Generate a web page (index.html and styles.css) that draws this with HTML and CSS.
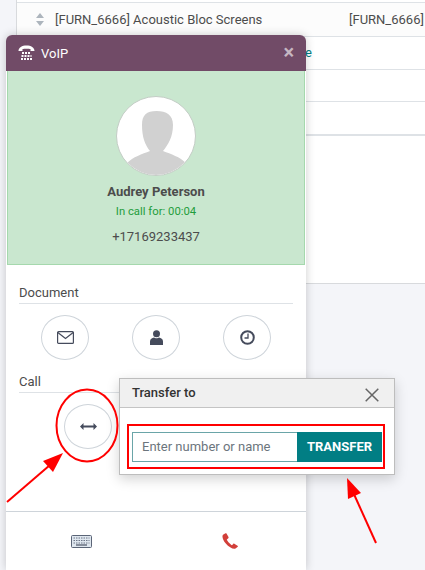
FILE: index.html
```html
<!DOCTYPE html>
<html lang="en">
<head>
	<meta charset="UTF-8">
	<title>VoIP transfer</title>
	<link rel="stylesheet" href="styles.css">
</head>
<body>
	<!-- list behind the softphone -->
	<div class="sheet">
		<div class="row row-first">
			<svg class="sort" width="8" height="13" viewBox="0 0 8 13"><path d="M4 0l4 5H0zM4 13L0 8h8z" fill="#adb5bd"/></svg>
			<span class="row-name">[FURN_6666] Acoustic Bloc Screens</span>
			<span class="row-ref">[FURN_6666]</span>
		</div>
		<div class="row row-link"><a href="#">e</a></div>
		<div class="row row-short"></div>
		<div class="row row-last"></div>
	</div>

	<!-- softphone -->
	<div class="voip">
		<div class="voip-head">
			<svg class="voip-phone" width="17" height="16" viewBox="0 0 17 16">
				<path d="M.5 6C.5 2.500 4 .5 8.500 .5S16.500 2.500 16.500 6H12.500V4C11 3.500 6 3.500 4.500 4V6Z" fill="#fff"/>
				<path d="M4 8h9M3.500 11h10M3 14h11" fill="none" stroke="#fff" stroke-width="2" stroke-dasharray="2 1"/>
			</svg>
			<span class="voip-title">VoIP</span>
			<span class="voip-close">×</span>
		</div>
		<div class="contact">
			<div class="avatar">
				<svg width="78" height="78" viewBox="0 0 78 78">
					<path d="M39.500 14C29.500 14 25 18 25 28C25 40 28 48 33 54C25 57 16 60 10 66V78H69V66C63 60 54 57 46 54C51 48 56 40 56 28C56 18 49.500 14 39.500 14Z" fill="#d1d1d1"/>
				</svg>
			</div>
			<div class="contact-name">Audrey Peterson</div>
			<div class="contact-time">In call for: 00:04</div>
			<div class="contact-phone">+17169233437</div>
		</div>
		<div class="section">
			<div class="section-title">Document</div>
			<div class="btn-row">
				<span class="circle">
					<svg width="17" height="13" viewBox="0 0 17 13" fill="none" stroke="#454b5c" stroke-width="1.200"><rect x=".6" y=".6" width="15.800" height="11.800" rx="1"/><path d="M.8 1.500L8.500 7.500L16.200 1.500"/></svg>
				</span>
				<span class="circle">
					<svg width="13" height="15" viewBox="0 0 13 15" fill="#454b5c"><circle cx="6.500" cy="3.800" r="3.500"/><path d="M0 15V11.500C0 9 2 7.800 4 7.500C5 8.500 8 8.500 9 7.500C11 7.800 13 9 13 11.500V15Z"/></svg>
				</span>
				<span class="circle">
					<svg width="15" height="15" viewBox="0 0 15 15" fill="none" stroke="#454b5c"><circle cx="7.500" cy="7.500" r="6.300" stroke-width="2"/><path d="M8 3.500V8H4.500" stroke-width="1.300"/></svg>
				</span>
			</div>
		</div>
		<div class="section section-call">
			<div class="section-title">Call</div>
			<div class="btn-row btn-row-call">
				<span class="circle">
					<svg width="17" height="7" viewBox="0 0 17 7" fill="#454b5c"><path d="M0 3.500L3.500 0V2.500H13.500V0L17 3.500L13.500 7V4.500H3.500V7Z"/></svg>
				</span>
			</div>
		</div>
		<div class="voip-foot">
			<svg width="21" height="13" viewBox="0 0 21 13">
				<rect x=".5" y=".5" width="20" height="12" rx="1" fill="#dfe7ef" stroke="#5b6577"/>
				<path d="M2.500 3h16M2.500 5.500h16M2.500 8h16" stroke="#6d7688" stroke-dasharray="1.500 1"/>
				<path d="M5 10h11" stroke="#4a5263" stroke-width="1.200"/>
			</svg>
			<svg width="16" height="16" viewBox="0 0 16 16"><path d="M3.500 .3L1 1.800C-.3 3 .8 7 3.800 10.500C7 14.500 11.500 16.500 13.500 15.500L15.800 13.700C16 13.300 15.800 12.900 15.500 12.700L12.300 10.700C11.900 10.500 11.500 10.600 11.200 10.900L10 12.200C8.500 11.700 5.300 8.200 4.800 6.500L6.300 5.200C6.600 4.900 6.700 4.500 6.500 4.100L4.500 .6C4.300 .2 3.800 .1 3.500 .3Z" fill="#d23f3a"/></svg>
		</div>
	</div>

	<!-- transfer popover -->
	<div class="popover">
		<div class="popover-head">
			<span class="popover-title">Transfer to</span>
			<svg class="popover-close" width="14" height="14" viewBox="0 0 14 14"><path d="M.7 .7L13.300 13.300M13.300 .7L.7 13.300" stroke="#666" stroke-width="1.500"/></svg>
		</div>
		<div class="popover-body">
			<div class="transfer">
				<input class="transfer-input" type="text" placeholder="Enter number or name">
				<button class="transfer-btn" type="button">TRANSFER</button>
			</div>
		</div>
	</div>

	<!-- red annotations drawn on the screenshot -->
	<svg class="marks" width="425" height="570" viewBox="0 0 425 570" fill="none" stroke="#f00">
		<ellipse cx="87" cy="425.500" rx="30.500" ry="36" stroke-width="2"/>
		<rect x="128" y="425" width="256" height="43" stroke-width="2"/>
		<path d="M7 502L50 465" stroke-width="2"/>
		<path d="M63 453L43 461L53 472Z" fill="#f00" stroke="none"/>
		<path d="M376 543L353 492" stroke-width="2"/>
		<path d="M347 478L348 499L361 493Z" fill="#f00" stroke="none"/>
	</svg>
</body>
</html>
```

FILE: styles.css
```css
* {
	box-sizing: border-box;
	margin: 0;
	padding: 0;
}
body {
	width: 425px;
	height: 570px;
	overflow: hidden;
	background: #f4f5f9;
	font-family: Roboto, "Liberation Sans", sans-serif;
	font-size: 13px;
	color: #4c4c4c;
}
.sheet {
	margin-left: 16px;
	height: 284px;
	padding-top: 2px;
	background: #fff;
	border-left: 1px solid #d8dadd;
	border-bottom: 1px solid #d8dadd;
}
.row {
	height: 33px;
	border-top: 1px solid #dee2e6;
	background: #fff;
}
.row-first {
	display: flex;
	align-items: center;
	height: 34px;
	background: #fcfcfc;
	padding-left: 19px;
}
.sort {
	margin-right: 11px;
}
.row-name {
	width: 294px;
}
.row-link {
	padding-left: 288px;
	padding-top: 8px;
	font-size: 13px;
}
.row-link a {
	color: #017e84;
	text-decoration: none;
}
.row-short {
	height: 32px;
}
.row-last {
	border-bottom: 2px solid #dee2e6;
	height: 35px;
}

.voip {
	position: absolute;
	left: 6px;
	top: 35px;
	width: 300px;
	height: 535px;
	display: flex;
	flex-direction: column;
	background: #fff;
	border-radius: 6px 6px 0 0;
	box-shadow: 0 0 10px rgba(0, 0, 0, .2);
}
.voip-head {
	display: flex;
	align-items: center;
	height: 36px;
	flex: none;
	padding: 0 12px;
	background: #714b67;
	border-radius: 6px 6px 0 0;
	color: #fff;
}
.voip-title {
	margin-left: 6px;
	flex: 1;
	font-size: 13px;
}
.voip-close {
	margin-top: -2px;
	font-size: 20px;
	font-weight: bold;
	line-height: 20px;
	color: #c6b7c2;
}
.contact {
	height: 194px;
	flex: none;
	display: flex;
	flex-direction: column;
	align-items: center;
	margin: 0 1px;
	padding-top: 25px;
	background: #c9e7cf;
	border: 1px solid #a5d8ad;
	border-top: 0;
}
.avatar {
	width: 80px;
	height: 80px;
	flex: none;
	overflow: hidden;
	background: #fff;
	border: 1px solid #c4cdc6;
	border-radius: 50%;
}
.avatar svg {
	display: block;
}
.contact-name {
	margin-top: 7px;
	font-weight: bold;
	line-height: 18px;
}
.contact-time {
	margin-top: 3px;
	font-size: 11.300px;
	line-height: 16px;
	color: #1f9d3c;
}
.contact-phone {
	margin-top: 8px;
	line-height: 18px;
}
.section {
	flex: none;
	padding: 19px 13px 0;
}
.section-call {
	padding-top: 13px;
}
.section-title {
	line-height: 18px;
	padding-bottom: 1px;
	border-bottom: 1px solid #dee2e6;
}
.btn-row {
	display: flex;
	justify-content: space-between;
	padding: 11px 22px 0;
}
.btn-row-call {
	justify-content: flex-start;
	padding: 11px 0 0 45px;
}
.circle {
	width: 48px;
	height: 45px;
	display: flex;
	align-items: center;
	justify-content: center;
	border: 1px solid #ced4da;
	border-radius: 50%;
}
.voip-foot {
	margin-top: auto;
	height: 59px;
	flex: none;
	display: flex;
	align-items: center;
	justify-content: space-around;
	padding-right: 3px;
	border-top: 1px solid #ced4da;
}

.popover {
	position: absolute;
	left: 119px;
	top: 378px;
	width: 276px;
	height: 97px;
	background: #fff;
	border: 1px solid #bdbdbd;
	box-shadow: 0 4px 12px rgba(0, 0, 0, .18);
}
.popover-head {
	display: flex;
	align-items: center;
	justify-content: space-between;
	height: 29px;
	padding: 0 15px 0 12px;
	background: #f0f0f0;
	border-bottom: 1px solid #c4c4c4;
}
.popover-title {
	margin-top: -2px;
	font-weight: 500;
	color: #333;
}
.popover-close {
	margin-top: 3px;
}
.popover-body {
	padding: 24px 12px 0;
}
.transfer {
	display: flex;
	height: 30px;
}
.transfer-input {
	width: 165px;
	padding: 0 0 2px 9px;
	border: 1px solid #6aa5a8;
	border-right: 0;
	outline: 0;
	font: 13px Roboto, sans-serif;
}
.transfer-input::placeholder {
	color: #6c757d;
	opacity: 1;
}
.transfer-btn {
	width: 85px;
	padding-bottom: 2px;
	border: 0;
	background: #017e84;
	color: #fff;
	font: bold 13px Roboto, sans-serif;
}
.marks {
	position: absolute;
	left: 0;
	top: 0;
}
```
